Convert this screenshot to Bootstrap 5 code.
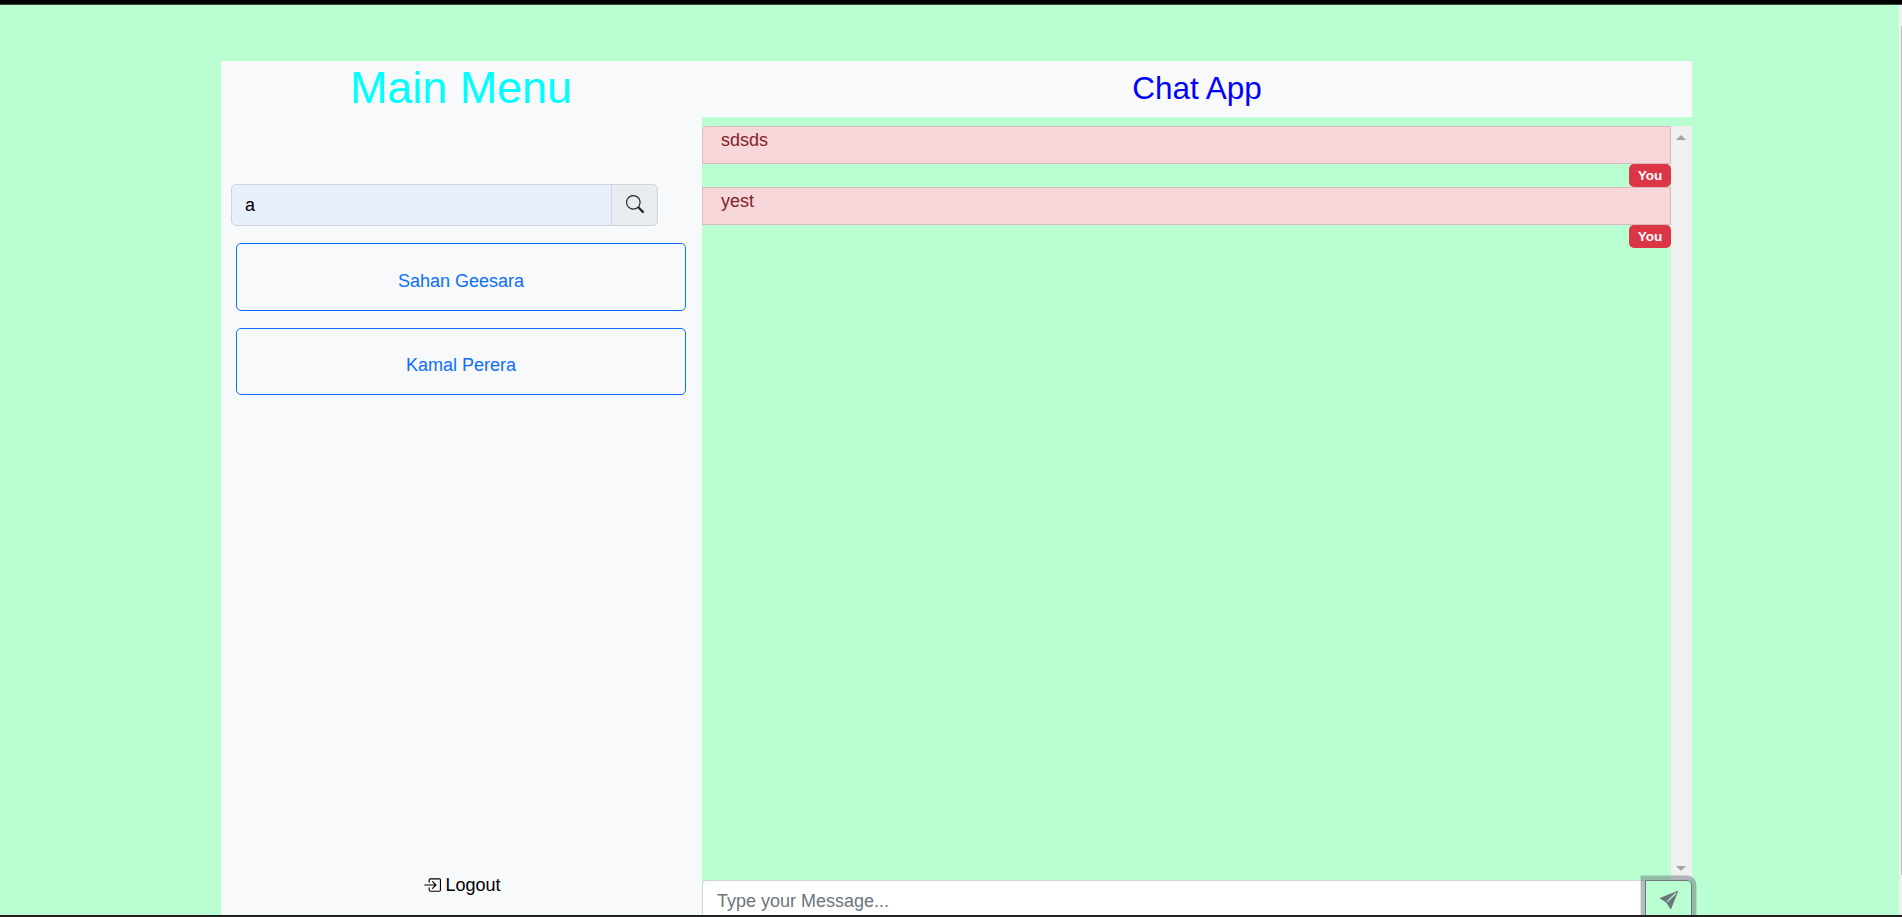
<!DOCTYPE html>
<html lang="en">
<head>
<meta charset="utf-8">
<meta name="viewport" content="width=device-width, initial-scale=1">
<title>Chat App</title>
<link href="https://cdn.jsdelivr.net/npm/bootstrap@5.3.0/dist/css/bootstrap.min.css" rel="stylesheet">
<style>
  html { font-size: 17.6px; }
  body { font-family: "Liberation Sans", Arial, sans-serif; font-size: 18px; background: #b9ffd1; height: 917px; overflow: hidden; border-top: 4px solid #000; border-bottom: 2px solid #231f20; line-height: 26.4px; box-shadow: inset 0 1px #3c4a43; }
  .app-shell { width: 1471px; margin-left: 221px; padding-top: 57px; }
  .side-menu { width: 481px; background: #f8f9fb; }
  .menu-title { font-size: 44.9px; line-height: 52.8px; color: aqua; height: 123px; padding: 1px 1px 0 0; }
  .chat-title { font-size: 31.5px; line-height: 37px; color: blue; height: 56px; padding-top: 9px; background: #f8f9fb; }
  .search-box { width: 427px; height: 42px; margin-left: 10px; }
  .search-box .form-control { background: #e8f0fe; color: #000; font-size: 18px; padding: 6px 13px 5px; }
  .search-box .input-group-text { width: 47px; background: #e9ecef; padding: 0 0 2px; border-color: #ced4da; border-radius: 5px; }
  .search-box .form-control, .entry .form-control { border-color: #ced4da; border-radius: 5px; }
  .contact { width: 450px; height: 68px; margin: 17px 0 0 15px; padding: 15px 0 7px; border-radius: 5px; font-size: 18px; --bs-btn-color: #0d6efd; }
  .contact + .contact { height: 67px; padding-top: 14px; }
  .messages { height: 754px; margin-top: 9px; }
  .msg { height: 38px; padding: 0 18px; border: 1px solid #d9b9be; background: #f8d7da; color: #842029; line-height: 26px; }
  .msg:first-child { border-top-left-radius: 4px; }
  .you { display: block; width: 42px; height: 23px; margin-left: auto; padding: 0; border-radius: 5px; font-size: 13.6px; line-height: 23px; background: #dc3545; }
  .track { width: 21px; background: #f0f0f0; padding: 9px 1px 9px 0; }
  .entry { height: 35px; }
  .entry .form-control { height: 42px; padding: 6px 14px 5px; border-radius: 5px 0 0 0; font-size: 18px; }
  .entry .form-control::placeholder { color: #6c757d; }
  .send { width: 47px; height: 42px; flex: none; border: 1px solid #6c757d; border-radius: 0 5px 0 0; color: #6c757d; padding: 0 0 5px 0; box-shadow: 0 0 0 4.4px rgba(108,117,125,.5); position: relative; z-index: 2; margin-left: -1px; }
  .logout { margin: auto 0 16px 202px; color: #000; height: 27px; }
  .logout svg { margin-top: -2px; }
  .page-track { position: absolute; right: 0; top: 5px; width: 3px; height: 910px; padding-top: 21px; background: #f0f0f0; }
  .page-thumb { width: 1px; height: 849px; margin: 0 0 0 2px; background: #c1c1c1; }
</style>
</head>
<body>
<div class="app-shell d-flex h-100">
  <aside class="side-menu d-flex flex-column">
    <h1 class="menu-title text-center fw-normal mb-0">Main Menu</h1>
    <div class="input-group search-box">
      <input class="form-control" type="text" value="a" aria-label="Search">
      <span class="input-group-text justify-content-center">
        <svg width="18" height="18" viewBox="0 0 16 16" fill="#212529"><path d="M11.742 10.344a6.5 6.5 0 1 0-1.397 1.398h-.001c.03.04.062.078.098.115l3.85 3.85a1 1 0 0 0 1.415-1.414l-3.85-3.85a1.007 1.007 0 0 0-.115-.1zM12 6.5a5.5 5.5 0 1 1-11 0 5.5 5.5 0 0 1 11 0z"/></svg>
      </span>
    </div>
    <button class="btn btn-outline-primary contact">Sahan Geesara</button>
    <button class="btn btn-outline-primary contact">Kamal Perera</button>
    <a class="logout d-flex align-items-center text-decoration-none" href="#">
      <svg class="me-1" width="18" height="18" viewBox="0 0 16 16" fill="currentColor"><path fill-rule="evenodd" d="M6 3.5a.5.5 0 0 1 .5-.5h8a.5.5 0 0 1 .5.5v9a.5.5 0 0 1-.5.5h-8a.5.5 0 0 1-.5-.5v-2a.5.5 0 0 0-1 0v2A1.5 1.5 0 0 0 6.5 14h8a1.5 1.5 0 0 0 1.5-1.5v-9A1.5 1.5 0 0 0 14.5 2h-8A1.5 1.5 0 0 0 5 3.5v2a.5.5 0 0 0 1 0v-2z"/><path fill-rule="evenodd" d="M11.854 8.354a.5.5 0 0 0 0-.708l-3-3a.5.5 0 1 0-.708.708L10.293 7.5H1.5a.5.5 0 0 0 0 1h8.793l-2.147 2.146a.5.5 0 0 0 .708.708l3-3z"/></svg>
      <span>Logout</span>
    </a>
  </aside>
  <main class="flex-grow-1">
    <h3 class="chat-title text-center fw-normal mb-0"><span>Chat App</span></h3>
    <div class="messages d-flex">
      <div class="flex-grow-1">
        <div class="msg">sdsds</div>
        <span class="badge you">You</span>
        <div class="msg">yest</div>
        <span class="badge you">You</span>
      </div>
      <div class="track d-flex flex-column justify-content-between align-items-center">
        <svg width="10" height="5"><path d="M0 5L5 0l5 5z" fill="#a3a3a3"/></svg>
        <svg width="10" height="5"><path d="M0 0l5 5 5-5z" fill="#a3a3a3"/></svg>
      </div>
    </div>
    <div class="entry d-flex">
      <input class="form-control" type="text" placeholder="Type your Message..." aria-label="Message">
      <button class="btn send" aria-label="Send">
        <svg width="18" height="18" viewBox="0 0 16 16" fill="currentColor"><path d="M15.964.686a.5.5 0 0 0-.65-.65L.767 5.855H.766l-.452.18a.5.5 0 0 0-.082.887l.41.26.001.002 4.995 3.178 3.178 4.995.002.002.26.41a.5.5 0 0 0 .886-.083l6-15Zm-1.833 1.89L6.637 10.07l-.215-.338a.5.5 0 0 0-.154-.154l-.338-.215 7.494-7.494 1.178-.471-.47 1.178Z"/></svg>
      </button>
    </div>
  </main>
</div>
<div class="page-track"><div class="page-thumb"></div></div>
</body>
</html>
